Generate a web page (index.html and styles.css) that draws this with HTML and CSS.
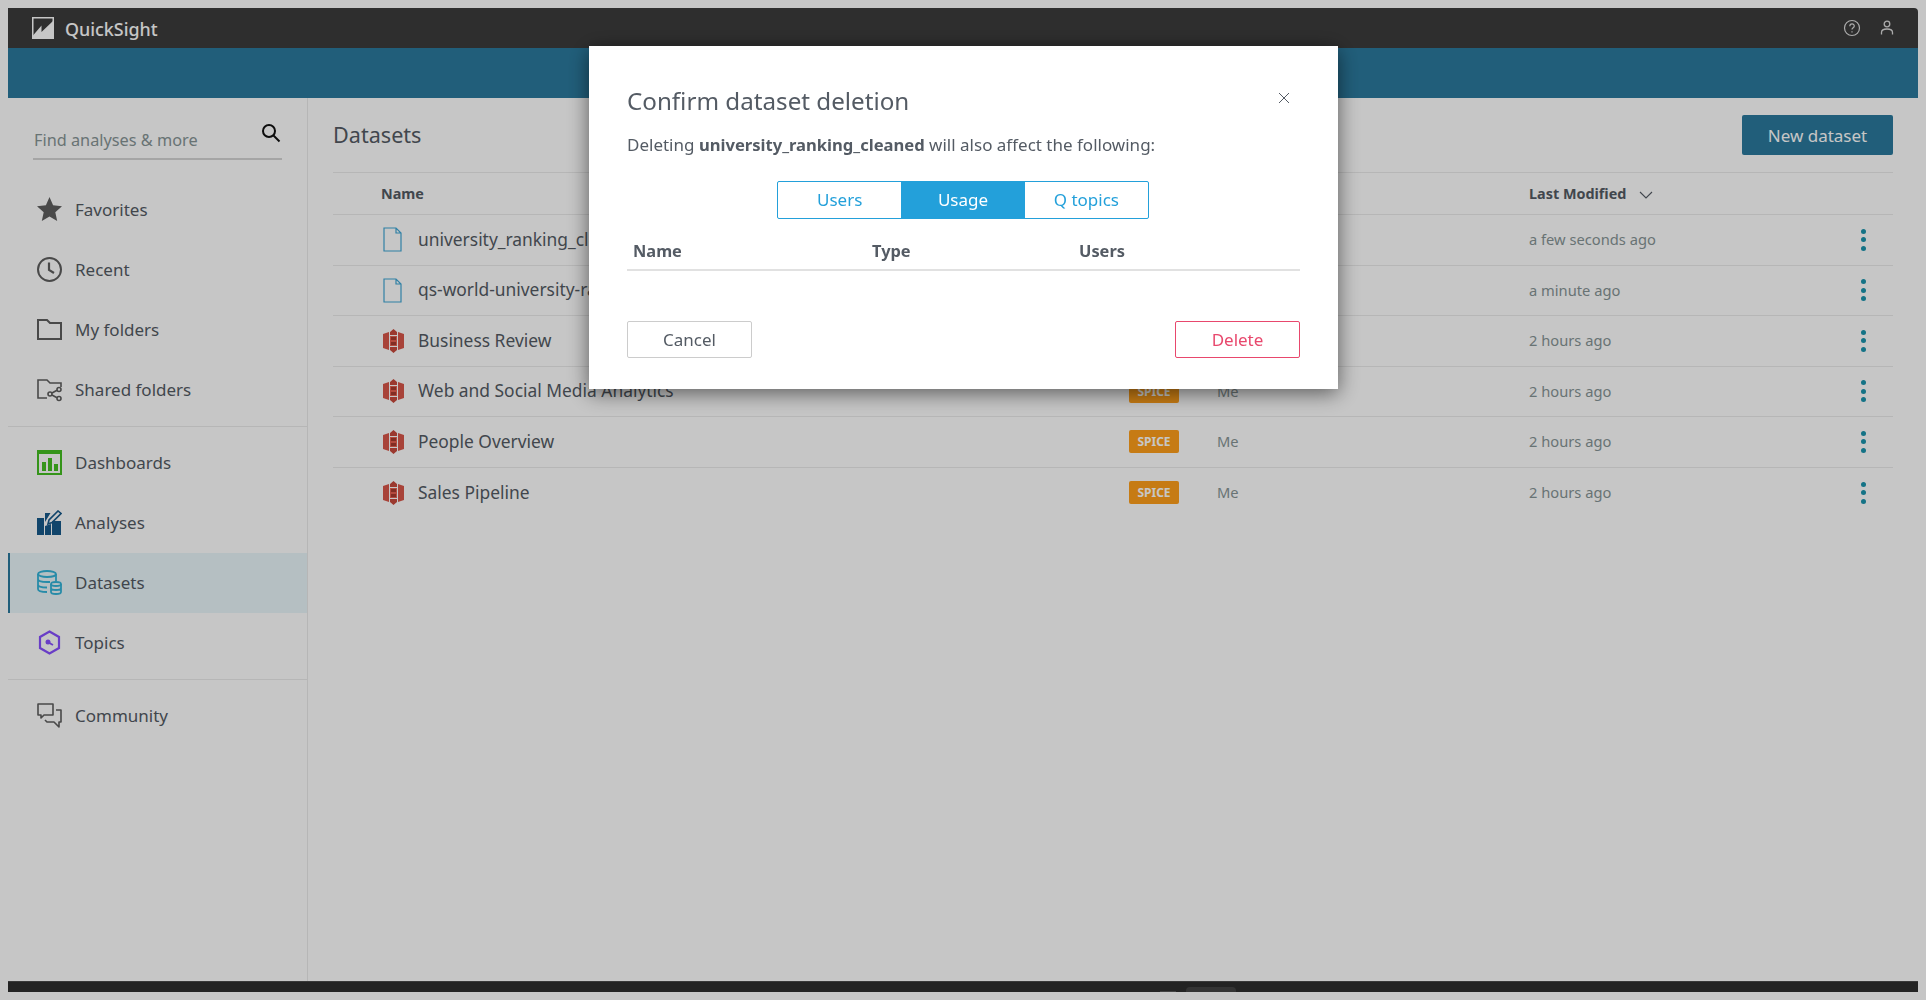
FILE: index.html
```html
<!DOCTYPE html>
<html>
<head>
    <meta charset="UTF-8">
    <title>QuickSight - Datasets</title>
    <link rel="stylesheet" href="styles.css">
</head>
<body>
<div class="app">
    <div class="topbar">
        <svg class="logo" width="22" height="22" viewBox="0 0 22 22"><path fill="none" stroke="#fff" stroke-width="1.500" d="M.75.75h20.500v20.500H.75z"/><path fill="#fff" d="M1 18.500L9.500 8.500V15L21 4v17.500H1z"/></svg>
        <span class="brand">QuickSight</span>
        <svg class="top-icon" width="18" height="18" viewBox="0 0 18 18" fill="none" stroke="#ddd" stroke-width="1.2"><circle cx="9" cy="9" r="7.500"/><path d="M6.800 7.200c0-3 4.500-3 4.500-.2 0 1.800-2.300 1.700-2.300 3.600"/><path d="M9 12.300v1.200"/></svg>
        <svg class="top-icon" width="16" height="18" viewBox="0 0 16 18" fill="none" stroke="#ddd" stroke-width="1.300"><circle cx="8" cy="5" r="2.800"/><path d="M2.500 15.500v-2c0-3 2.500-3.500 5.500-3.500s5.500.5 5.500 3.500v2"/></svg>
    </div>
    <div class="banner"></div>
    <div class="content">
        <div class="sidebar">
            <div class="search">
                <span class="search-text">Find analyses &amp; more</span>
                <svg class="search-icon" width="20" height="20" viewBox="0 0 20 20" fill="none" stroke="#111" stroke-width="2"><circle cx="8" cy="8" r="6"/><path d="M12.500 12.500l6 6"/></svg>
            </div>
            <div class="nav-group first">
                <div class="nav-item">
                    <svg width="25" height="25" viewBox="0 0 25 25"><path fill="#5f5f5f" d="M12.500 0l3.600 8.300 8.900.9-6.700 6 1.900 8.800-7.700-4.600L4.800 24l1.900-8.800-6.700-6 8.900-.9z"/></svg>
                    Favorites
                </div>
                <div class="nav-item">
                    <svg width="25" height="25" viewBox="0 0 25 25" fill="none" stroke="#5f5f5f" stroke-width="2"><circle cx="12.500" cy="12.500" r="11.500"/><path d="M12 5.500V13l5 3" stroke-width="2.200"/></svg>
                    Recent
                </div>
                <div class="nav-item">
                    <svg width="25" height="25" viewBox="0 0 25 25" fill="none" stroke="#5f5f5f" stroke-width="2"><path d="M1 22V3h9l3 3h11v16z"/></svg>
                    My folders
                </div>
                <div class="nav-item">
                    <svg width="25" height="25" viewBox="0 0 25 25" fill="none" stroke="#5f5f5f" stroke-width="1.600"><path d="M10 21H1V3h9l3 3h11v4"/><circle cx="13" cy="17" r="2"/><circle cx="22" cy="12.500" r="2"/><circle cx="22" cy="21.500" r="2"/><path d="M15 16l5-2.800M15 18l5 2.800"/></svg>
                    Shared folders
                </div>
            </div>
            <div class="nav-group">
                <div class="nav-item">
                    <svg width="25" height="25" viewBox="0 0 25 25"><path fill="none" stroke="#45bf22" stroke-width="2" d="M1 1h23v23H1z"/><path fill="#45bf22" d="M1 1h23v3H1zM5 12h4v9H5zM11 8h4v13h-4zM17 14h4v7h-4z"/></svg>
                    Dashboards
                </div>
                <div class="nav-item">
                    <svg width="25" height="25" viewBox="0 0 25 25"><path fill="#17598a" d="M0 8h7v17H0zM8 3h5.500L8 12zM8 16l3-1 3-1v11H8zM15 11h9v14h-9z"/><path fill="none" stroke="#17598a" stroke-width="1.600" d="M11 14l1-4 9-9 3 2.500-9 9z"/></svg>
                    Analyses
                </div>
                <div class="nav-item active">
                    <svg width="25" height="25" viewBox="0 0 25 25" fill="none" stroke="#33b4d9" stroke-width="1.800"><ellipse cx="10" cy="4" rx="9" ry="3"/><path d="M1 4v15c0 2 4 3 9 3M19 4v7M1 9c0 2 4 3 9 3h3M1 14.500c0 2 4 3 9 3"/><ellipse cx="19" cy="14" rx="5" ry="2"/><path d="M14 14v8c0 1 2 2 5 2s5-1 5-2v-8M14 18c0 1 2 2 5 2s5-1 5-2"/></svg>
                    Datasets
                </div>
                <div class="nav-item">
                    <svg width="25" height="25" viewBox="0 0 25 25" fill="none" stroke="#884fff" stroke-width="2.200"><path d="M12.500 1.500l9.500 5.500v11l-9.500 5.500L3 18V7z"/><path d="M11.500 12.500l4.500 2.500" stroke-width="1.800"/><circle cx="11" cy="12" r="2.500" fill="#884fff" stroke="none"/></svg>
                    Topics
                </div>
            </div>
            <div class="nav-group">
                <div class="nav-item">
                    <svg width="25" height="25" viewBox="0 0 25 25" fill="none" stroke="#5f5f5f" stroke-width="1.600" stroke-linejoin="round"><path d="M1 1h15v11H7l-3 3v-3H1z"/><path d="M19 7h5v12h-2v5l-5-5h-7l-2-2"/></svg>
                    Community
                </div>
            </div>
        </div>
        <div class="main">
            <div class="main-head">
                <h1 class="main-title">Datasets</h1>
                <button class="new-btn">New dataset</button>
            </div>
            <div class="table">
                <div class="row head">
                    <span class="head-name">Name</span>
                    <span></span>
                    <span>Owner</span>
                    <span class="sort">Last Modified
                        <svg width="14" height="8" viewBox="0 0 14 8" fill="none" stroke="#545b64" stroke-width="1.100"><path d="M1 1l6 6 6-6"/></svg>
                    </span>
                    <span></span>
                </div>
                <div class="row">
                    <svg class="file" width="19" height="25" viewBox="0 0 19 25" fill="none" stroke="#3fa6d6" stroke-width="1.200"><path d="M1 1h12l5 5v18H1zM13 1v5h5"/></svg>
                    <span class="name">university_ranking_cleaned</span>
                    <span class="badge">SPICE</span>
                    <span class="muted">Me</span>
                    <span class="muted">a few seconds ago</span>
                    <span class="kebab"><i></i><i></i><i></i></span>
                </div>
                <div class="row">
                    <svg class="file" width="19" height="25" viewBox="0 0 19 25" fill="none" stroke="#3fa6d6" stroke-width="1.200"><path d="M1 1h12l5 5v18H1zM13 1v5h5"/></svg>
                    <span class="name">qs-world-university-rankings</span>
                    <span class="badge">SPICE</span>
                    <span class="muted">Me</span>
                    <span class="muted">a minute ago</span>
                    <span class="kebab"><i></i><i></i><i></i></span>
                </div>
                <div class="row">
                    <svg class="spice" width="21" height="24" viewBox="0 0 21 24"><path fill="#d9574a" d="M0 5l6-2v18l-6-2zM21 5l-6-2v18l6-2z"/><path fill="#c84a3d" d="M7 3l3.500-3L14 3v3H7zM7 18h7v3l-3.500 3L7 21z"/><path fill="#e8604f" d="M7 7h7v10H7z"/><path fill="#a83a2e" d="M8 8h5v3H8zM8 13h5v3H8z"/></svg>
                    <span class="name">Business Review</span>
                    <span class="badge">SPICE</span>
                    <span class="muted">Me</span>
                    <span class="muted">2 hours ago</span>
                    <span class="kebab"><i></i><i></i><i></i></span>
                </div>
                <div class="row">
                    <svg class="spice" width="21" height="24" viewBox="0 0 21 24"><path fill="#d9574a" d="M0 5l6-2v18l-6-2zM21 5l-6-2v18l6-2z"/><path fill="#c84a3d" d="M7 3l3.500-3L14 3v3H7zM7 18h7v3l-3.500 3L7 21z"/><path fill="#e8604f" d="M7 7h7v10H7z"/><path fill="#a83a2e" d="M8 8h5v3H8zM8 13h5v3H8z"/></svg>
                    <span class="name">Web and Social Media Analytics</span>
                    <span class="badge">SPICE</span>
                    <span class="muted">Me</span>
                    <span class="muted">2 hours ago</span>
                    <span class="kebab"><i></i><i></i><i></i></span>
                </div>
                <div class="row">
                    <svg class="spice" width="21" height="24" viewBox="0 0 21 24"><path fill="#d9574a" d="M0 5l6-2v18l-6-2zM21 5l-6-2v18l6-2z"/><path fill="#c84a3d" d="M7 3l3.500-3L14 3v3H7zM7 18h7v3l-3.500 3L7 21z"/><path fill="#e8604f" d="M7 7h7v10H7z"/><path fill="#a83a2e" d="M8 8h5v3H8zM8 13h5v3H8z"/></svg>
                    <span class="name">People Overview</span>
                    <span class="badge">SPICE</span>
                    <span class="muted">Me</span>
                    <span class="muted">2 hours ago</span>
                    <span class="kebab"><i></i><i></i><i></i></span>
                </div>
                <div class="row last">
                    <svg class="spice" width="21" height="24" viewBox="0 0 21 24"><path fill="#d9574a" d="M0 5l6-2v18l-6-2zM21 5l-6-2v18l6-2z"/><path fill="#c84a3d" d="M7 3l3.500-3L14 3v3H7zM7 18h7v3l-3.500 3L7 21z"/><path fill="#e8604f" d="M7 7h7v10H7z"/><path fill="#a83a2e" d="M8 8h5v3H8zM8 13h5v3H8z"/></svg>
                    <span class="name">Sales Pipeline</span>
                    <span class="badge">SPICE</span>
                    <span class="muted">Me</span>
                    <span class="muted">2 hours ago</span>
                    <span class="kebab"><i></i><i></i><i></i></span>
                </div>
            </div>
        </div>
    </div>
    <div class="dock"><span class="dock-dash"></span><span class="dock-pill"></span></div>
</div>

<div class="overlay"></div>

<div class="modal">
    <div class="modal-head">
        <h2 class="modal-title">Confirm dataset deletion</h2>
        <svg class="close" width="12" height="12" viewBox="0 0 12 12" fill="none" stroke="#545b64" stroke-width="1"><path d="M1 1l10 10M11 1L1 11"/></svg>
    </div>
    <p class="modal-text">Deleting <b>university_ranking_cleaned</b> will also affect the following:</p>
    <div class="toggle">
        <span class="tab">Users</span>
        <span class="tab on">Usage</span>
        <span class="tab">Q topics</span>
    </div>
    <div class="usage-head">
        <span>Name</span>
        <span>Type</span>
        <span>Users</span>
    </div>
    <div class="modal-foot">
        <button class="btn cancel">Cancel</button>
        <button class="btn delete">Delete</button>
    </div>
</div>
</body>
</html>
```

FILE: styles.css
```css
* {
    margin: 0;
    padding: 0;
    box-sizing: border-box;
}
body {
    background-color: #fff;
    padding: 8px;
    height: 1000px;
    overflow: hidden;
    font-family: "Noto Sans", "Open Sans", sans-serif;
    color: #545b64;
}
.app {
    width: 1910px;
    height: 984px;
    display: flex;
    flex-direction: column;
}
.topbar {
    height: 40px;
    background-color: #3c3c3c;
    border-top-right-radius: 4px;
    display: flex;
    align-items: center;
    padding: 0 23px 0 24px;
    color: #fff;
}
.logo {
    margin-right: 11px;
}
.brand {
    font-size: 17.900px;
    font-weight: 500;
    margin-right: auto;
    padding-top: 2px;
}
.top-icon {
    margin-left: 18px;
}
.banner {
    height: 50px;
    background-color: #2b7a9e;
}
.content {
    flex: 1;
    display: flex;
    min-height: 0;
}
.sidebar {
    width: 300px;
    border-right: 1px solid #ebebeb;
    flex-shrink: 0;
}
.search {
    display: flex;
    align-items: flex-start;
    justify-content: space-between;
    margin: 25px 25px 0;
    height: 37px;
    border-bottom: 2px solid #d5d5d5;
    padding-right: 1px;
}
.search-text {
    font-size: 16.300px;
    color: #879596;
    padding: 6px 0 0 1px;
}
.nav-group {
    padding: 6px 0;
    border-top: 1px solid #ebebeb;
}
.nav-group.first {
    border-top: none;
    padding: 20px 0 6px;
}
.nav-item {
    height: 60px;
    display: flex;
    align-items: center;
    padding: 0 0 2px 29px;
    gap: 13px;
    font-size: 17px;
    color: #545b64;
}
.nav-item.active {
    background-color: #e9f6fa;
    border-left: 2px solid #2b7a9e;
    padding-left: 27px;
}
.main {
    flex: 1;
    padding: 17px 25px 0;
}
.main-head {
    display: flex;
    align-items: center;
    justify-content: space-between;
    height: 40px;
    margin-bottom: 17px;
}
.main-title {
    font-size: 21.600px;
    font-weight: 400;
    padding-bottom: 2px;
}
.new-btn {
    width: 151px;
    height: 40px;
    background-color: #2b7a9e;
    border: none;
    border-radius: 2px;
    color: #fff;
    font: 17px "Noto Sans", sans-serif;
}
.table {
    border-top: 1px solid #ebebeb;
}
.row {
    display: grid;
    grid-template-columns: 85px 711px 88px 312px 315px 49px;
    align-items: center;
    height: 50.500px;
    border-bottom: 1px solid #ebebeb;
    font-size: 14.700px;
}
.row.head {
    grid-template-columns: 796px 88px 312px 315px 49px;
    height: 42px;
    font-weight: 700;
    font-size: 14.400px;
}
.row.last {
    border-bottom: none;
}
.head-name {
    padding-left: 48px;
}
.row .file,
.row .spice {
    justify-self: start;
    margin-left: 50px;
}
.name {
    font-size: 17.400px;
    justify-self: start;
    padding-bottom: 2px;
}
.muted {
    color: #879596;
    padding-bottom: 1px;
}
.sort svg {
    margin-left: 9px;
}
.badge {
    width: 50px;
    height: 23px;
    line-height: 23px;
    text-align: center;
    background-color: #ff9f1a;
    border-radius: 2px;
    color: #fff;
    font-size: 12px;
    font-weight: 700;
}
.kebab {
    display: flex;
    flex-direction: column;
    align-items: center;
    gap: 3.500px;
    width: 5px;
    margin-left: 17px;
}
.kebab i {
    width: 5px;
    height: 5px;
    border-radius: 50%;
    background-color: #1b94ad;
}
.dock {
    height: 11px;
    background-color: #2e2e2e;
    border-top: 1px solid #4a4a4a;
    display: flex;
    align-items: flex-end;
    padding-left: 1152px;
    flex-shrink: 0;
}
.dock-dash {
    width: 16px;
    height: 1px;
    background-color: #555;
    margin-right: 10px;
}
.dock-pill {
    width: 50px;
    height: 5px;
    background-color: #444;
    border-radius: 4px 4px 0 0;
}
.overlay {
    position: fixed;
    left: 0;
    top: 0;
    width: 100%;
    height: 100%;
    background-color: rgba(0, 0, 0, .224);
}
.modal {
    position: fixed;
    left: 589px;
    top: 46px;
    width: 749px;
    height: 343px;
    background-color: #fff;
    box-shadow: 0 4px 20px rgba(0, 0, 0, .55);
    padding: 37px 38px 0;
}
.modal-head {
    display: flex;
    justify-content: space-between;
    align-items: flex-start;
}
.modal-title {
    font-size: 24.200px;
    font-weight: 400;
    line-height: 36px;
}
.close {
    margin: 9px 10px 0 0;
}
.modal-text {
    font-size: 17px;
    line-height: 24px;
    margin-top: 14px;
}
.modal-text b {
    font-size: 16.600px;
}
.toggle {
    display: flex;
    width: 372px;
    height: 38px;
    margin: 24px 0 0 150px;
    border: 1px solid #23a0da;
    border-radius: 2px;
}
.tab {
    flex: 1;
    text-align: center;
    line-height: 36px;
    font-size: 17px;
    color: #23a0da;
}
.tab.on {
    background-color: #23a0da;
    color: #fff;
}
.usage-head {
    display: grid;
    grid-template-columns: 239px 207px 1fr;
    height: 52px;
    padding: 12px 0 0 6px;
    align-items: center;
    border-bottom: 2px solid #e1e1e1;
    font-size: 16.400px;
    font-weight: 700;
}
.modal-foot {
    display: flex;
    justify-content: space-between;
    margin-top: 50px;
}
.btn {
    width: 125px;
    height: 37px;
    background-color: #fff;
    border: 1px solid #ccc;
    border-radius: 2px;
    font: 17px "Noto Sans", sans-serif;
    color: #545b64;
}
.btn.delete {
    border-color: #e8486d;
    color: #e8486d;
}
```
